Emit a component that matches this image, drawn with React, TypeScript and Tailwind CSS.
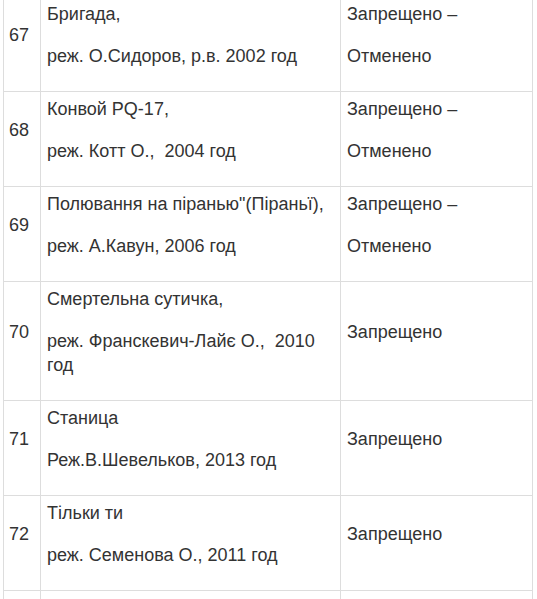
const rows: { n: string; title: string[]; status: string[] }[] = [
  { n: '67', title: ['Бригада,', 'реж. О.Сидоров, р.в. 2002 год'], status: ['Запрещено –', 'Отменено'] },
  { n: '68', title: ['Конвой PQ-17,', 'реж. Котт О.,  2004 год'], status: ['Запрещено –', 'Отменено'] },
  { n: '69', title: ['Полювання на піранью"(Піраньї),', 'реж. А.Кавун, 2006 год'], status: ['Запрещено –', 'Отменено'] },
  { n: '70', title: ['Смертельна сутичка,', 'реж. Франскевич-Лайє О.,  2010 год'], status: ['Запрещено'] },
  { n: '71', title: ['Станица', 'Реж.В.Шевельков, 2013 год'], status: ['Запрещено'] },
  { n: '72', title: ['Тільки ти', 'реж. Семенова О., 2011 год'], status: ['Запрещено'] },
  { n: '', title: ['', ''], status: [''] },
]

export default function App() {
  return (
    <div className="h-[599px] overflow-hidden bg-white font-['Liberation_Sans',Arial,sans-serif] text-[18px] leading-6 text-[#333]">
      <table className="ml-[3px] mt-[-4px] w-[530px] table-fixed border-collapse">
        <tbody>
          {rows.map((r, k) => (
            <tr key={k}>
              <td className="w-[37px] border border-[#ddd] px-[5px] py-[5px] align-middle">
                <p className="mb-[18px]">{r.n || '\u00a0'}</p>
              </td>
              <td className="w-[300px] border border-[#ddd] px-[6px] py-[5px] align-middle">
                {r.title.map((t, i) => (
                  <p key={i} className="mb-[18px] whitespace-pre-wrap">{t || '\u00a0'}</p>
                ))}
              </td>
              <td className="border border-[#ddd] px-[6px] py-[5px] align-middle">
                {r.status.map((t, i) => (
                  <p key={i} className="mb-[18px]">{t || '\u00a0'}</p>
                ))}
              </td>
            </tr>
          ))}
        </tbody>
      </table>
    </div>
  )
}
